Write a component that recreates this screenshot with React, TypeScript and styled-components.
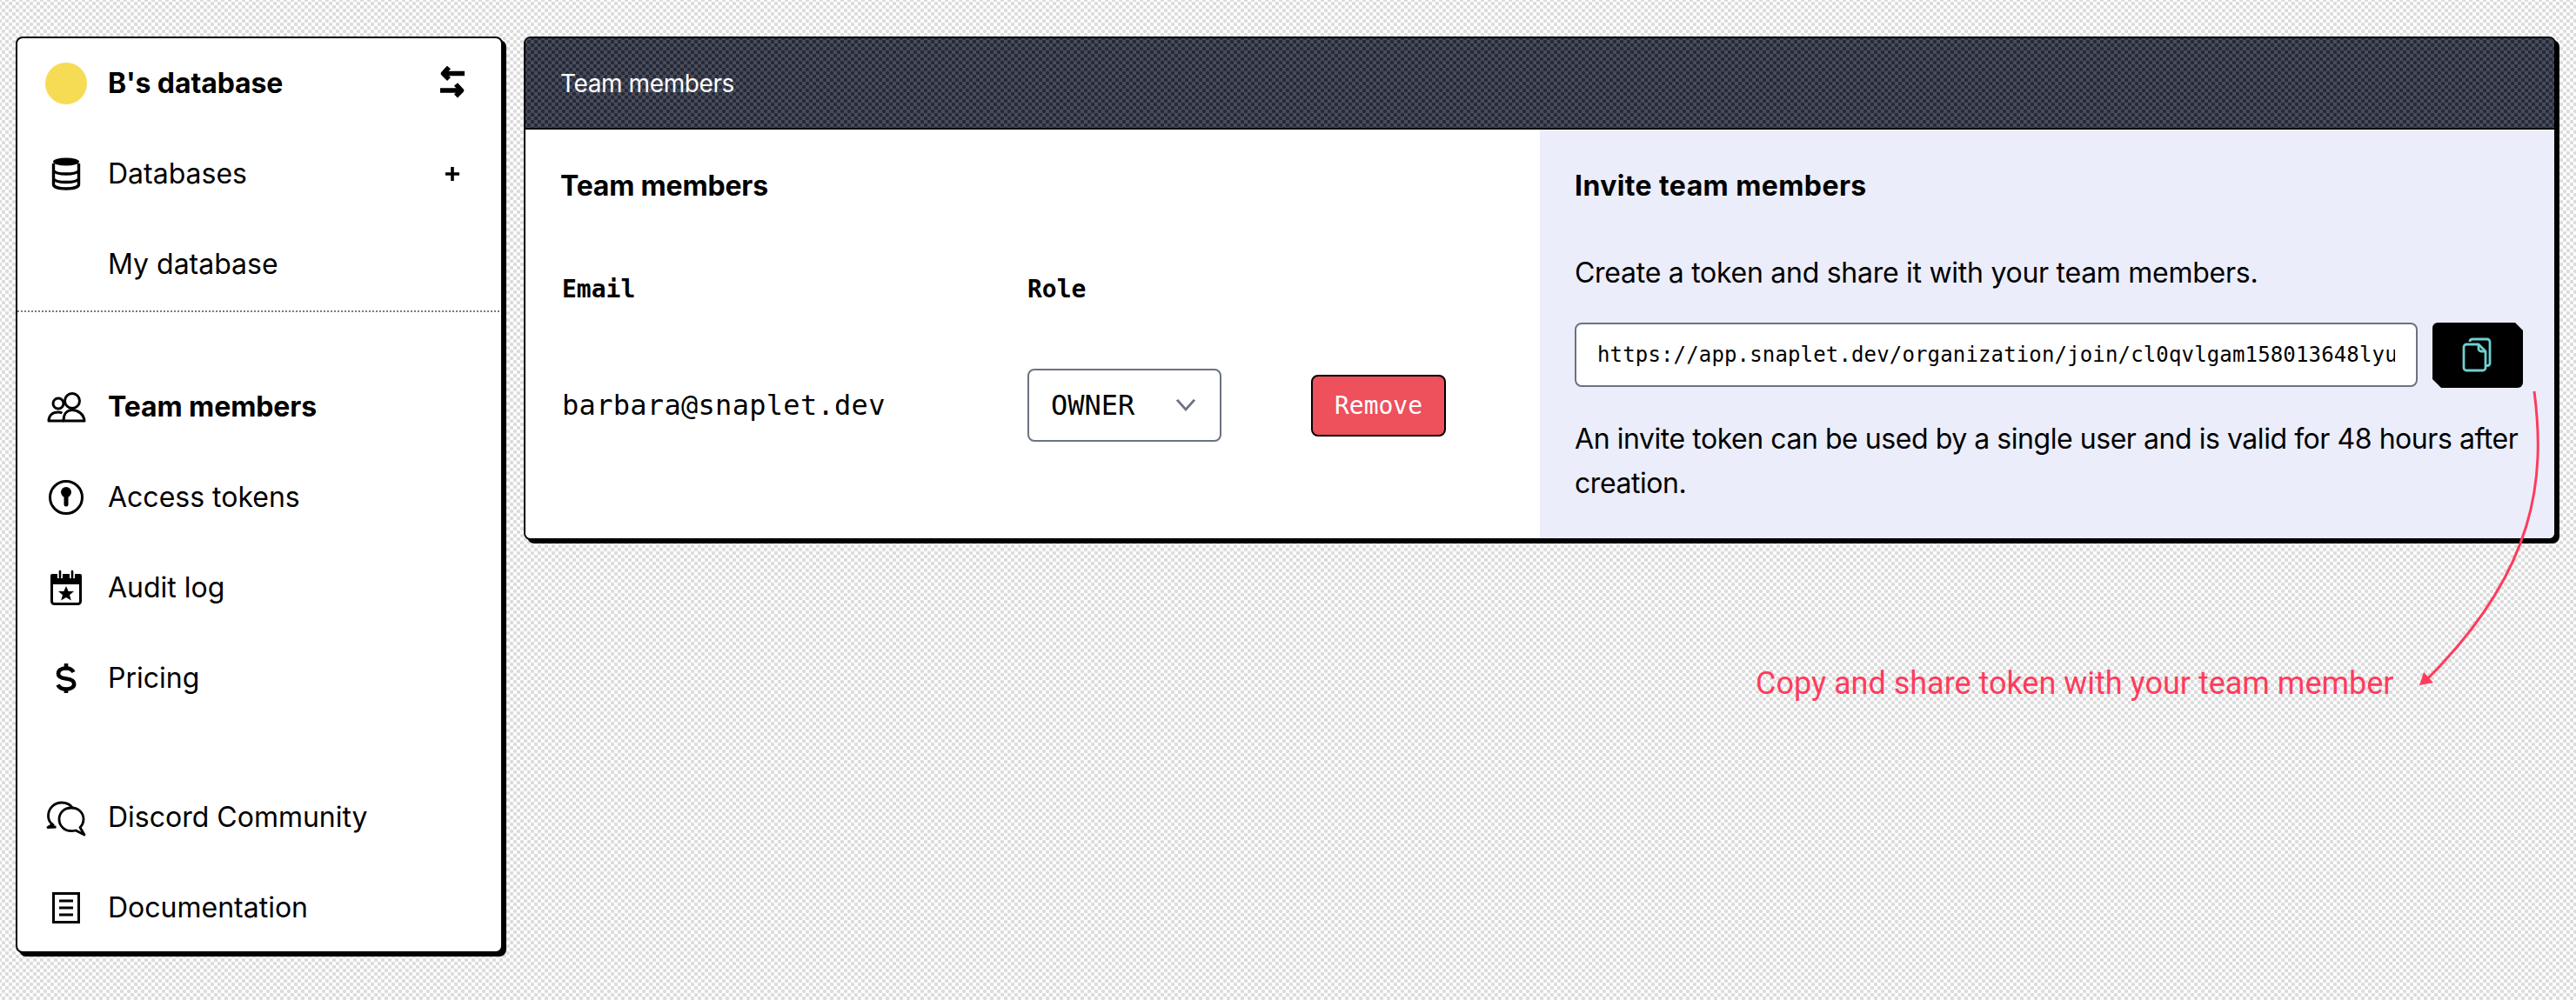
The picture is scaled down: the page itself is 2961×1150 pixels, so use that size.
import React from 'react'
import styled, { createGlobalStyle } from 'styled-components'

const GlobalStyle = createGlobalStyle`
  html, body {
    margin: 0;
    padding: 0;
    height: 100%;
  }
  body {
    background-color: #fff;
    background-image: radial-gradient(circle at center, #dcdcdc 2px, transparent 2.6px),
      radial-gradient(circle at center, #dcdcdc 2px, transparent 2.6px);
    background-size: 8px 8px;
    background-position: 0 0, 4px 4px;
    font-family: Inter, 'Noto Sans', sans-serif;
    color: #000;
  }
`

const Page = styled.div`
  position: relative;
  display: flex;
  align-items: flex-start;
  gap: 24px;
  padding: 42px 0 0 18px;
  width: 2961px;
  height: 1150px;
  box-sizing: border-box;
  overflow: hidden;
`

const Sidebar = styled.nav`
  flex: none;
  display: flex;
  flex-direction: column;
  width: 560px;
  height: 1054px;
  box-sizing: border-box;
  padding-top: 2px;
  background: #fff;
  border: 2px solid #000;
  border-radius: 8px;
  box-shadow: 4px 4px 0 #000;
`

const NavGroup = styled.div<{ $top?: number }>`
  display: flex;
  flex-direction: column;
  gap: 4px;
  margin-top: ${({ $top }) => $top ?? 0}px;
`

const NavRow = styled.div`
  display: flex;
  align-items: center;
  gap: 24px;
  height: 100px;
  padding: 0 42px 0 32px;
`

const NavIcon = styled.span`
  flex: none;
  width: 48px;
  height: 48px;
  display: block;

  svg {
    display: block;
  }
`

const Avatar = styled.span`
  flex: none;
  width: 48px;
  height: 48px;
  border-radius: 50%;
  background: #f6dc55;
`

const NavLabel = styled.span<{ $bold?: boolean }>`
  flex: 1;
  font-size: 32px;
  line-height: 48px;
  font-weight: ${({ $bold }) => ($bold ? 700 : 400)};
  letter-spacing: ${({ $bold }) => ($bold ? '-0.1px' : '0')};
`

const NavAction = styled.span`
  flex: none;
  width: 28px;
  height: 40px;

  svg {
    display: block;
  }
`

const Divider = styled.div`
  height: 2px;
  margin-top: 3px;
  background-image: linear-gradient(90deg, #77778a 50%, transparent 50%);
  background-size: 4px 2px;
`

const Panel = styled.main`
  flex: none;
  width: 2336px;
  height: 579px;
  box-sizing: border-box;
  display: flex;
  flex-direction: column;
  background: #fff;
  border: 2px solid #000;
  border-radius: 8px;
  box-shadow: 4px 4px 0 #000;
  overflow: hidden;
`

const PanelHeader = styled.header`
  flex: none;
  display: flex;
  align-items: center;
  height: 103px;
  padding: 0 40px;
  color: #fff;
  font-size: 28px;
  letter-spacing: -0.4px;
  background-color: #4a4e5c;
  background-image: radial-gradient(circle at center, #262a38 2px, transparent 2.6px),
    radial-gradient(circle at center, #262a38 2px, transparent 2.6px);
  background-size: 8px 8px;
  background-position: 0 0, 4px 4px;
  border-bottom: 2px solid #000;
`

const PanelBody = styled.div`
  flex: 1;
  display: grid;
  grid-template-columns: 1166px 1166px;
`

const Column = styled.section<{ $tinted?: boolean }>`
  padding: 41px ${({ $tinted }) => ($tinted ? 20 : 40)}px 0 40px;
  background: ${({ $tinted }) => ($tinted ? '#ebedfa' : '#fff')};
`

const SectionTitle = styled.h2<{ $wide?: boolean }>`
  margin: 0;
  font-size: 32px;
  line-height: 48px;
  font-weight: 700;
  letter-spacing: ${({ $wide }) => ($wide ? '0.4px' : '-0.2px')};
`

const MembersGrid = styled.div`
  display: grid;
  grid-template-columns: 535px 223px 155px;
  margin-top: 71px;
  padding-left: 2px;
`

const HeaderCell = styled.div`
  font-family: 'DejaVu Sans Mono', monospace;
  font-size: 28px;
  font-weight: 700;
  line-height: 48px;
`

const MemberCell = styled.div`
  display: flex;
  align-items: center;
  height: 84px;
  margin-top: 67px;
`

const Email = styled(MemberCell)`
  font-family: 'DejaVu Sans Mono', monospace;
  font-size: 32px;
  letter-spacing: 0.3px;
`

const RoleSelect = styled.div`
  flex: 1;
  display: flex;
  align-items: center;
  justify-content: space-between;
  height: 84px;
  box-sizing: border-box;
  padding: 0 27px 0 25px;
  background: #fff;
  border: 2px solid #6b7280;
  border-radius: 8px;
  font-family: 'DejaVu Sans Mono', monospace;
  font-size: 32px;
`

const RemoveButton = styled.button`
  width: 155px;
  height: 71px;
  margin-left: 103px;
  padding: 0;
  flex: none;
  border: 2px solid #000;
  border-radius: 8px;
  background: #ee505c;
  color: #fff;
  font-family: 'DejaVu Sans Mono', monospace;
  font-size: 28px;
`

const Paragraph = styled.p<{ $top: number }>`
  margin: ${({ $top }) => $top}px 0 0;
  font-size: 32px;
  line-height: 51px;
  letter-spacing: -0.27px;
`

const Hint = styled(Paragraph)`
  letter-spacing: -0.45px;
`

const TokenRow = styled.div`
  display: flex;
  gap: 17px;
  margin-top: 32px;
`

const TokenInput = styled.div`
  flex: none;
  width: 969px;
  height: 74px;
  box-sizing: border-box;
  padding: 0 24px;
  display: flex;
  align-items: center;
  background: #fff;
  border: 2px solid #6b7280;
  border-radius: 8px;
  font-family: 'DejaVu Sans Mono', monospace;
  font-size: 24px;
  letter-spacing: 0.15px;
  white-space: nowrap;
`

const TokenText = styled.span`
  display: block;
  flex: none;
  width: 917px;
  overflow: hidden;
`

const CopyButton = styled.button`
  flex: none;
  width: 104px;
  height: 75px;
  display: flex;
  align-items: center;
  justify-content: center;
  padding: 0 0 2px;
  border: 0;
  border-radius: 6px;
  background: #000;
  clip-path: polygon(0 0, 95px 0, 104px 9px, 104px 100%, 10px 100%, 0 65px);
`

const Annotation = styled.svg`
  position: absolute;
  left: 2700px;
  top: 430px;
  pointer-events: none;
`

const Note = styled.span`
  position: absolute;
  left: 2018px;
  top: 762px;
  font-family: Roboto, sans-serif;
  font-size: 36px;
  line-height: 48px;
  color: #ff3b5c;
  white-space: nowrap;
`

const Svg = ({ children }: { children: React.ReactNode }) => (
  <svg width="48" height="48" viewBox="0 0 48 48" fill="none" stroke="#000">
    {children}
  </svg>
)

const DatabaseIcon = () => (
  <Svg>
    <path d="M9.500 12v24c0 3 6 5 14.500 5s14.500-2 14.500-5V12" strokeWidth="3.400" />
    <ellipse cx="24" cy="10" rx="15" ry="4.600" fill="#000" stroke="none" />
    <path
      d="M9.500 20.500c2 2.500 8 3.500 14.500 3.500s12.500-1 14.500-3.500M9.500 30c2 2.500 8 3.500 14.500 3.500s12.500-1 14.500-3.500"
      strokeWidth="3.400"
    />
  </Svg>
)

const TeamIcon = () => (
  <Svg>
    <circle cx="31" cy="17" r="8.500" strokeWidth="3" />
    <circle cx="15" cy="20" r="6" strokeWidth="3" />
    <path d="M21 40c0-8 4-12.500 10-12.500S44.500 32 45 40z" strokeWidth="3" strokeLinejoin="round" />
    <path d="M21 40H4c0-6 4-10 11-10 1.500 0 3 .3 4.500 1" strokeWidth="3" strokeLinejoin="round" />
  </Svg>
)

const KeyIcon = () => (
  <Svg>
    <circle cx="24" cy="24" r="18.500" strokeWidth="3" />
    <circle cx="24" cy="18" r="6" fill="#000" stroke="none" />
    <path d="M24 18v14" strokeWidth="5" strokeLinecap="round" />
  </Svg>
)

const CalendarIcon = () => (
  <Svg>
    <path d="M8 8h32a2 2 0 0 1 2 2v10H6V10a2 2 0 0 1 2-2z" fill="#000" stroke="none" />
    <rect x="7.500" y="10" width="33" height="32.500" rx="3" strokeWidth="3" />
    <path d="M17 5v8M31 5v8" stroke="#fff" strokeWidth="6" />
    <path d="M17 5v7M31 5v7" strokeWidth="2.600" strokeLinecap="round" />
    <path
      d="M24 22l2.600 6h6.400l-5 4.200 1.800 6.400-5.800-3.600-5.800 3.600 1.800-6.400-5-4.200h6.400z"
      fill="#000"
      stroke="none"
    />
  </Svg>
)

const DollarIcon = () => (
  <Svg>
    <path
      d="M32.500 17c-1.500-3-4.500-4.500-8.500-4.500-5.500 0-9 2.500-9 6.300 0 3.700 3 5 9 5.700 6 .7 9.200 2.300 9.200 6 0 3.800-3.700 6-9.200 6-4.500 0-8-1.700-9.500-5"
      strokeWidth="4.600"
    />
    <path d="M24 7v34" strokeWidth="4.600" strokeDasharray="6 22 6" />
  </Svg>
)

const ChatIcon = () => (
  <Svg>
    <path
      d="M10 33.500c-4-2.500-6.500-6.500-6.500-11C3.500 14 10 7 19 7c5.500 0 10 2.500 13 6.500M9.500 31.500L3 35.500l9.500-.5"
      strokeWidth="2.800"
      strokeLinejoin="round"
    />
    <path
      d="M30 13c8 0 14 5.500 14 13 0 4-1.500 7-4 9.500l5 8.500-10-5c-1.500.5-3.300.700-5 .700-8 0-14-6-14-13.700C16 18.500 22 13 30 13z"
      fill="#fff"
      strokeWidth="2.800"
      strokeLinejoin="round"
    />
  </Svg>
)

const DocIcon = () => (
  <Svg>
    <rect x="9.500" y="7.500" width="29" height="33" strokeWidth="3" />
    <path d="M16 16h16M16 24h16M16 32h16" strokeWidth="3" />
  </Svg>
)

const SwapIcon = () => (
  <svg width="28" height="40" viewBox="0 0 28 40" fill="none" stroke="#000" strokeWidth="5.500">
    <path d="M28 8.500H4" />
    <path d="M10 1.500L3.500 8.500l6.500 6.500" strokeLinejoin="round" />
    <path d="M0 28h24" />
    <path d="M18 21l6.500 7-6.500 6.500" strokeLinejoin="round" />
  </svg>
)

const PlusIcon = () => (
  <svg width="28" height="40" viewBox="0 0 28 40" fill="none" stroke="#000" strokeWidth="3.600">
    <path d="M14 12v16M6 20h16" />
  </svg>
)

const ChevronIcon = () => (
  <svg width="24" height="24" viewBox="0 0 24 24" fill="none" stroke="#6b7280" strokeWidth="3">
    <path d="M2 6l10 14L22 6" transform="translate(0 1) scale(1 0.8)" />
  </svg>
)

const CopyIcon = () => (
  <svg width="40" height="44" viewBox="0 0 40 44" fill="none" stroke="#6fcfcf" strokeWidth="2.800" strokeLinejoin="round">
    <path d="M11 7V6.500a3 3 0 0 1 3-2.500h17a3 3 0 0 1 3 3v25a3 3 0 0 1-3 2.500h-2" />
    <path d="M7 10h14l8 8v19a3 3 0 0 1-3 3H7a3 3 0 0 1-3-3V13a3 3 0 0 1 3-3z" />
    <path d="M21 10v5a3 3 0 0 0 3 3h5" />
  </svg>
)

type NavItem = { label: string; icon?: React.ReactNode; action?: React.ReactNode; bold?: boolean }

const topNav: NavItem[] = [
  { label: 'Databases', icon: <DatabaseIcon />, action: <PlusIcon /> },
  { label: 'My database' },
]

const mainNav: NavItem[] = [
  { label: 'Team members', icon: <TeamIcon />, bold: true },
  { label: 'Access tokens', icon: <KeyIcon /> },
  { label: 'Audit log', icon: <CalendarIcon /> },
  { label: 'Pricing', icon: <DollarIcon /> },
]

const footerNav: NavItem[] = [
  { label: 'Discord Community', icon: <ChatIcon /> },
  { label: 'Documentation', icon: <DocIcon /> },
]

const renderItem = ({ label, icon, action, bold }: NavItem) => (
  <NavRow key={label}>
    <NavIcon>{icon}</NavIcon>
    <NavLabel $bold={bold}>{label}</NavLabel>
    {action && <NavAction>{action}</NavAction>}
  </NavRow>
)

export default function App() {
  return (
    <>
      <GlobalStyle />
      <Page>
        <Sidebar>
          <NavGroup>
            <NavRow>
              <Avatar />
              <NavLabel $bold>B's database</NavLabel>
              <NavAction>
                <SwapIcon />
              </NavAction>
            </NavRow>
            {topNav.map(renderItem)}
          </NavGroup>
          <Divider />
          <NavGroup $top={59}>{mainNav.map(renderItem)}</NavGroup>
          <NavGroup $top={60}>{footerNav.map(renderItem)}</NavGroup>
        </Sidebar>

        <Panel>
          <PanelHeader>Team members</PanelHeader>
          <PanelBody>
            <Column>
              <SectionTitle>Team members</SectionTitle>
              <MembersGrid>
                <HeaderCell>Email</HeaderCell>
                <HeaderCell>Role</HeaderCell>
                <HeaderCell />
                <Email>barbara@snaplet.dev</Email>
                <MemberCell>
                  <RoleSelect>
                    OWNER
                    <ChevronIcon />
                  </RoleSelect>
                </MemberCell>
                <MemberCell>
                  <RemoveButton>Remove</RemoveButton>
                </MemberCell>
              </MembersGrid>
            </Column>
            <Column $tinted>
              <SectionTitle $wide>Invite team members</SectionTitle>
              <Paragraph $top={50}>Create a token and share it with your team members.</Paragraph>
              <TokenRow>
                <TokenInput>
                  <TokenText>https://app.snaplet.dev/organization/join/cl0qvlgam158013648lyu0k2m</TokenText>
                </TokenInput>
                <CopyButton>
                  <CopyIcon />
                </CopyButton>
              </TokenRow>
              <Hint $top={33}>
                An invite token can be used by a single user and is valid for 48 hours after creation.
              </Hint>
            </Column>
          </PanelBody>
        </Panel>

        <Annotation width="240" height="380" viewBox="0 0 240 380" fill="none">
          <path d="M213 20C226 120 216 225 90 351" stroke="#ff3b5c" strokeWidth="3" />
          <path d="M81 358L86 343L97 355z" fill="#ff3b5c" />
        </Annotation>
        <Note>Copy and share token with your team member</Note>
      </Page>
    </>
  )
}
